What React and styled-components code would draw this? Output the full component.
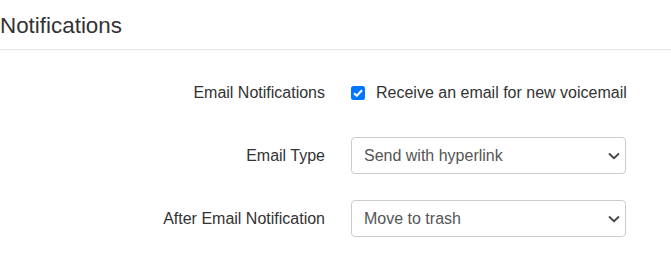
import React, { useState } from "react";
import styled, { createGlobalStyle } from "styled-components";

const Global = createGlobalStyle`
  html, body { margin: 0; padding: 0; background: #fff; }
  body { font-family: "Liberation Sans", Arial, sans-serif; color: #333; }
`;

const Page = styled.div`
  width: 671px;
`;

const Header = styled.div`
  padding: 14px 0 11px;
  border-bottom: 1px solid #e5e5e5;
`;

const Title = styled.h1`
  margin: 0;
  font-size: 22.4px;
  line-height: 24px;
  font-weight: 400;
  color: #333;
`;

const Form = styled.form`
  display: grid;
  grid-template-columns: 325px 275px;
  column-gap: 26px;
  row-gap: 26px;
  grid-auto-rows: 37px;
  padding-top: 24px;
  margin: 0;
`;

const Label = styled.label`
  display: flex;
  align-items: center;
  justify-content: flex-end;
  font-size: 16px;
  color: #333;
  white-space: nowrap;
  padding-top: ${(p) => p.$shift || 0}px;
`;

const CheckRow = styled.label`
  display: flex;
  align-items: center;
  gap: 11px;
  font-size: 16px;
  color: #333;
  white-space: nowrap;
  cursor: pointer;
  padding-top: 1px;
`;

const Box = styled.span`
  width: 14px;
  height: 14px;
  border-radius: 2.5px;
  background: ${(p) => (p.$checked ? "#0075ff" : "#fff")};
  border: ${(p) => (p.$checked ? "none" : "1px solid #767676")};
  box-sizing: border-box;
  display: flex;
  align-items: center;
  justify-content: center;
  flex: none;
`;

const HiddenInput = styled.input`
  display: none;
`;

const SelectWrap = styled.div`
  position: relative;
  height: 37px;
`;

const Select = styled.select`
  appearance: none;
  -webkit-appearance: none;
  width: 100%;
  height: 37px;
  box-sizing: border-box;
  border: 1px solid #ccc;
  border-radius: 4px;
  background: #fff;
  padding: 0 30px 0 12px;
  font-family: "Liberation Sans", Arial, sans-serif;
  font-size: 16px;
  color: #555;
  outline: none;
`;

const Chevron = styled.svg`
  position: absolute;
  right: 6px;
  top: 50%;
  transform: translateY(-50%);
  pointer-events: none;
`;

function Dropdown({ value, options, onChange }) {
  return (
    <SelectWrap>
      <Select value={value} onChange={(e) => onChange(e.target.value)}>
        {options.map((o) => (
          <option key={o}>{o}</option>
        ))}
      </Select>
      <Chevron width="12" height="8" viewBox="0 0 12 8">
        <path d="M1 1.5 L6 6.2 L11 1.5" fill="none" stroke="#444" strokeWidth="1.8" />
      </Chevron>
    </SelectWrap>
  );
}

export default function App() {
  const [checked, setChecked] = useState(true);
  const [type, setType] = useState("Send with hyperlink");
  const [after, setAfter] = useState("Move to trash");
  return (
    <Page>
      <Global />
      <Header>
        <Title>Notifications</Title>
      </Header>
      <Form>
        <Label $shift={1}>Email Notifications</Label>
        <CheckRow>
          <HiddenInput type="checkbox" checked={checked} onChange={() => setChecked(!checked)} />
          <Box $checked={checked}>
            {checked && (
              <svg width="10" height="8" viewBox="0 0 10 8">
                <path d="M1 4.2 L3.8 6.8 L9 1.2" fill="none" stroke="#fff" strokeWidth="2" />
              </svg>
            )}
          </Box>
          Receive an email for new voicemail
        </CheckRow>
        <Label>Email Type</Label>
        <Dropdown
          value={type}
          onChange={setType}
          options={["Send with hyperlink", "Send with attachment", "Send notification only"]}
        />
        <Label>After Email Notification</Label>
        <Dropdown
          value={after}
          onChange={setAfter}
          options={["Move to trash", "Mark as read", "Leave unchanged"]}
        />
      </Form>
    </Page>
  );
}
